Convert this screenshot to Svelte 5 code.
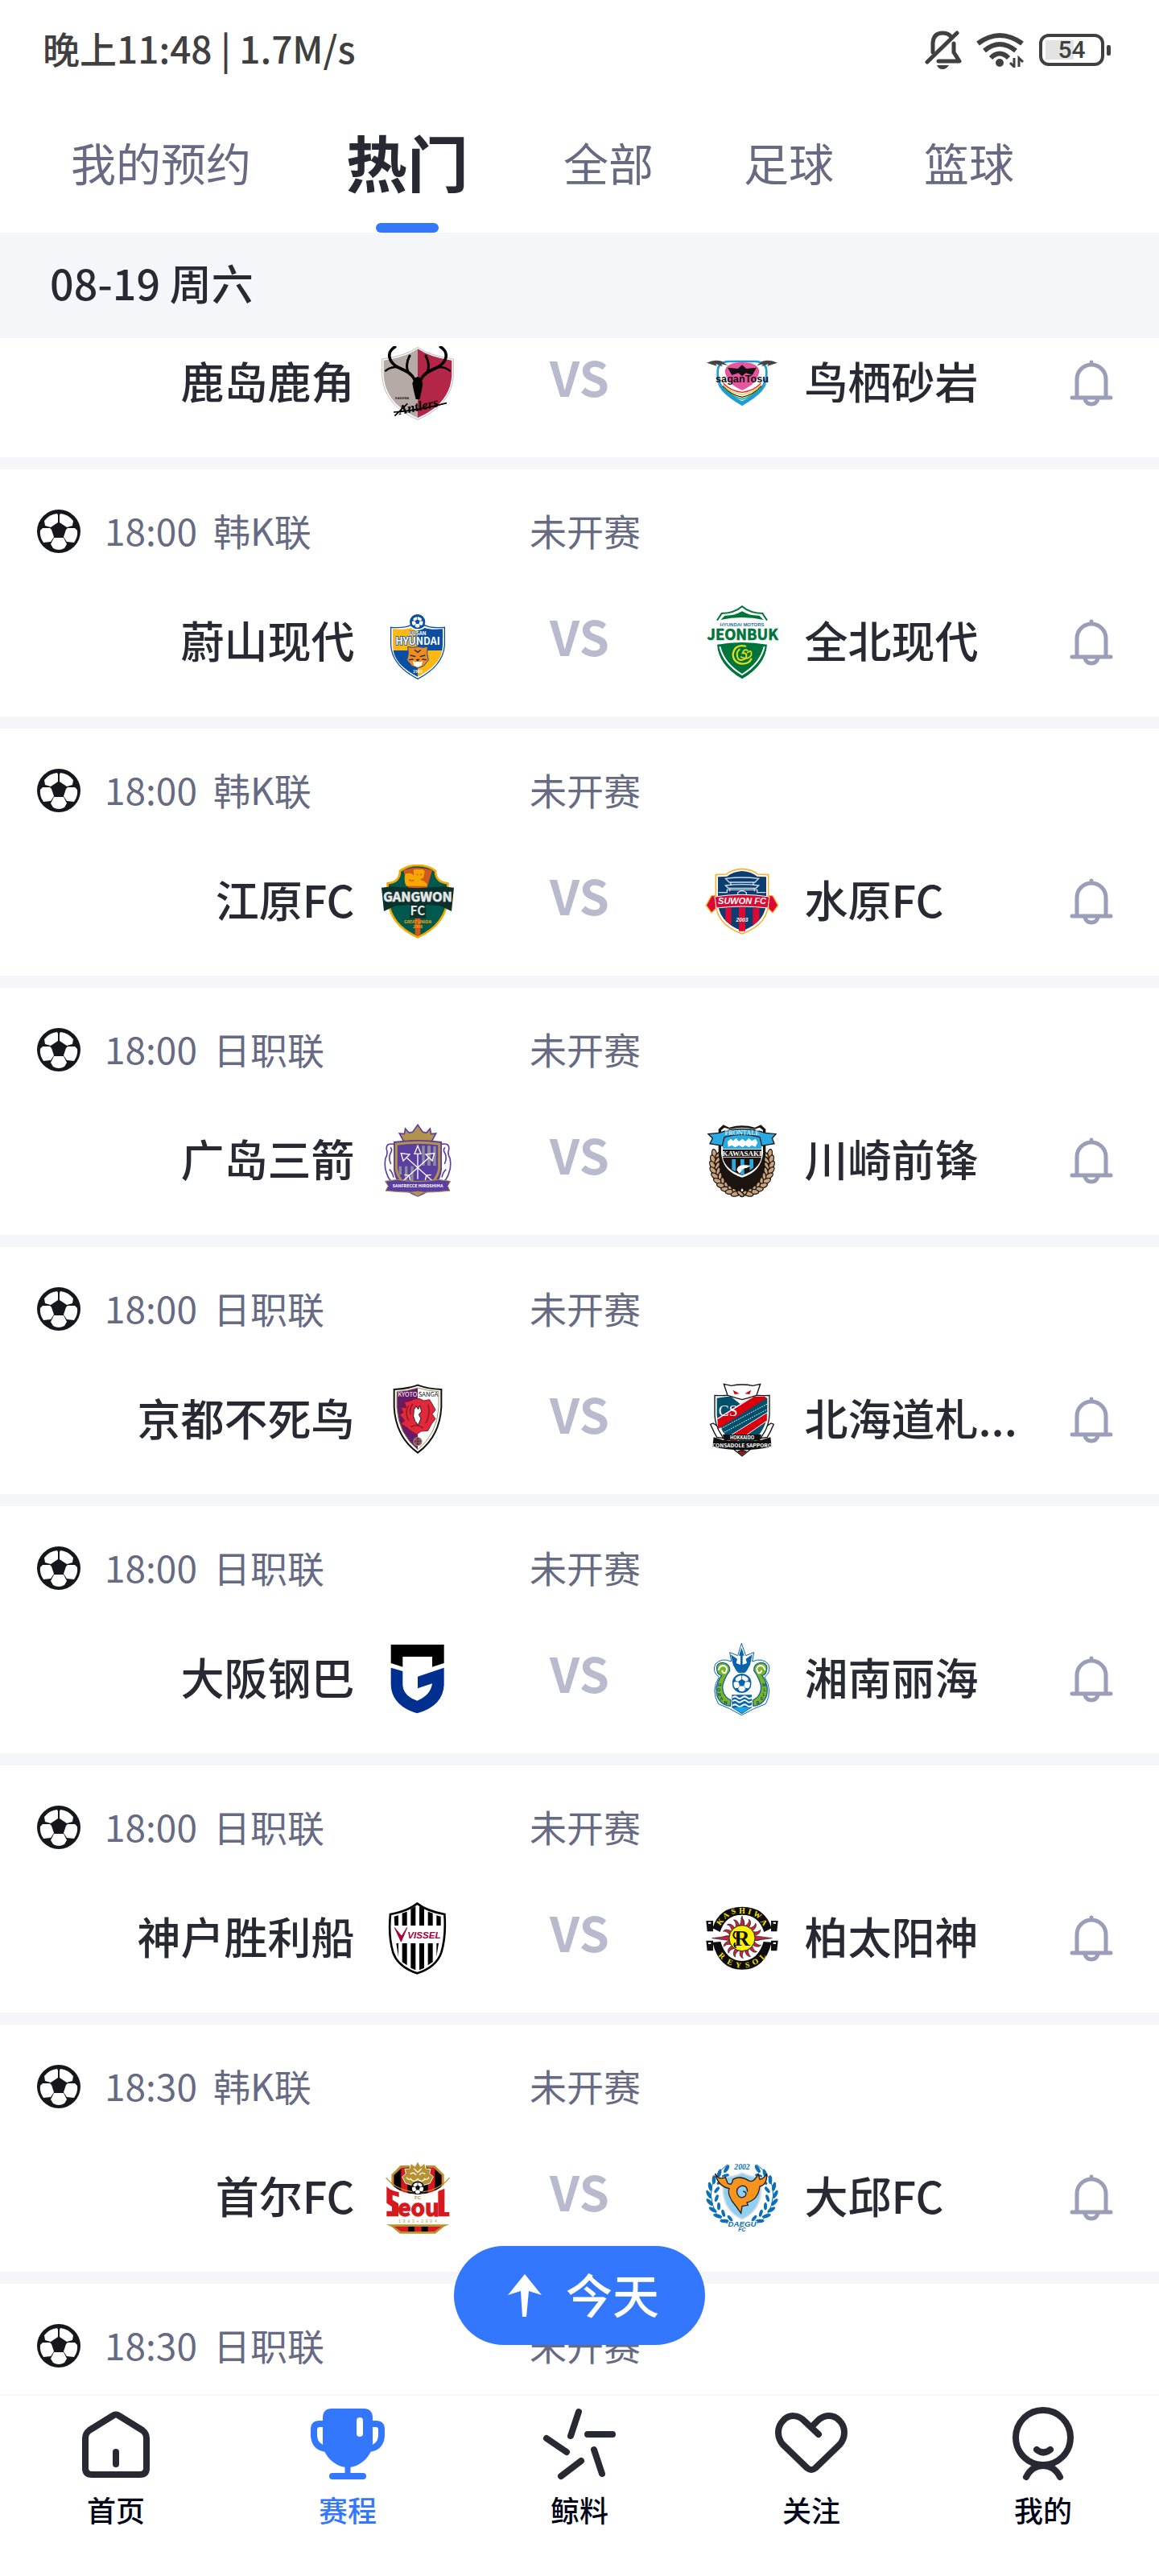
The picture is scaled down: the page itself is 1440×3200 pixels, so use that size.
<script lang="ts">
  type Side = { name: string; crest: string };
  type Match = { time?: string; league?: string; home: Side; away: Side };

  const tabs = ['我的预约', '热门', '全部', '足球', '篮球'];
  let activeTab = $state('热门');

  const matches: Match[] = [
    { home: { name: '鹿岛鹿角', crest: 'kashima' }, away: { name: '鸟栖砂岩', crest: 'tosu' } },
    { time: '18:00', league: '韩K联', home: { name: '蔚山现代', crest: 'ulsan' }, away: { name: '全北现代', crest: 'jeonbuk' } },
    { time: '18:00', league: '韩K联', home: { name: '江原FC', crest: 'gangwon' }, away: { name: '水原FC', crest: 'suwon' } },
    { time: '18:00', league: '日职联', home: { name: '广岛三箭', crest: 'hiroshima' }, away: { name: '川崎前锋', crest: 'kawasaki' } },
    { time: '18:00', league: '日职联', home: { name: '京都不死鸟', crest: 'kyoto' }, away: { name: '北海道札...', crest: 'sapporo' } },
    { time: '18:00', league: '日职联', home: { name: '大阪钢巴', crest: 'gamba' }, away: { name: '湘南丽海', crest: 'shonan' } },
    { time: '18:00', league: '日职联', home: { name: '神户胜利船', crest: 'vissel' }, away: { name: '柏太阳神', crest: 'reysol' } },
    { time: '18:30', league: '韩K联', home: { name: '首尔FC', crest: 'seoul' }, away: { name: '大邱FC', crest: 'daegu' } }
  ];

  const nav = [
    { id: 'home', label: '首页' },
    { id: 'schedule', label: '赛程' },
    { id: 'whale', label: '鲸料' },
    { id: 'follow', label: '关注' },
    { id: 'mine', label: '我的' }
  ];

  // Leaves along an arc, given as centre, radii and an angle range in degrees.
  function leaves(cx: number, cy: number, rx: number, ry: number, from: number, to: number, count: number) {
    return Array.from({ length: count }, (_, i) => {
      const deg = from + ((to - from) * i) / (count - 1);
      const rad = (deg * Math.PI) / 180;
      return { x: Math.round(cx + rx * Math.cos(rad)), y: Math.round(cy + ry * Math.sin(rad)), deg: Math.round(deg) };
    });
  }
  const wheatRight = leaves(138, 150, 108, 112, -18, 78, 10);
  const laurelOuter = leaves(138, 130, 124, 112, -62, 58, 9);
  const laurelInner = leaves(138, 130, 96, 96, -50, 62, 7);
  const rays = Array.from({ length: 16 }, (_, i) => Math.round(i * 22.5));
</script>

{#snippet ballArt(ink: string)}
  <svg viewBox="0 0 54 54" aria-hidden="true">
    <circle cx="27" cy="27" r="27" fill={ink} />
    <g fill="#fff">
      <path d="M9 14Q15 6 25 5L26 7V16L17 22L10 20Z" />
      <path d="M45 14Q39 6 29 5L28 7V16L37 22L44 20Z" />
      <path d="M4 26L7 23L16 23L18 25L21 34L17 40L8 41Q3 34 4 26Z" />
      <path d="M50 26L47 23L38 23L36 25L33 34L37 40L46 41Q51 34 50 26Z" />
      <path d="M21 35H33L37 43L34 48Q27 52 20 48L17 43Z" />
    </g>
  </svg>
{/snippet}

{#snippet miniBall(x: number, y: number, r: number, ink: string)}
  <svg x={x - r} y={y - r} width={2 * r} height={2 * r} viewBox="0 0 54 54">
    <circle cx="27" cy="27" r="27" fill={ink} />
    <g fill="#fff">
      <path d="M9 14Q15 6 25 5L26 7V16L17 22L10 20Z" />
      <path d="M45 14Q39 6 29 5L28 7V16L37 22L44 20Z" />
      <path d="M4 26L7 23L16 23L18 25L21 34L17 40L8 41Q3 34 4 26Z" />
      <path d="M50 26L47 23L38 23L36 25L33 34L37 40L46 41Q51 34 50 26Z" />
      <path d="M21 35H33L37 43L34 48Q27 52 20 48L17 43Z" />
    </g>
  </svg>
{/snippet}

{#snippet crest(id: string)}
  <svg class="crest" viewBox="0 0 276 276" aria-hidden="true">
    {#if id === 'kashima'}
      <path d="M5 48Q95 36 138 4Q181 36 271 48V110Q264 220 138 274Q12 220 5 110Z" fill="#fff" stroke="#999" stroke-width="2" />
      <path d="M138 10Q92 42 11 53V110Q18 215 138 267Z" fill="#b5aaa6" />
      <path d="M138 10Q184 42 265 53V110Q258 215 138 267Z" fill="#b42647" />
      <g fill="none" stroke="#000" stroke-linecap="round">
        <path d="M128 128C112 92 84 92 56 74C28 54 22 22 53 3" stroke-width="11" />
        <path d="M110 106C90 86 98 54 108 36" stroke-width="9" />
        <path d="M88 88C62 72 34 78 18 92" stroke-width="7" />
        <path d="M148 128C164 92 192 92 220 74C248 54 254 22 223 3" stroke-width="11" />
        <path d="M166 106C186 86 178 54 168 36" stroke-width="9" />
        <path d="M188 88C214 72 242 78 258 92" stroke-width="7" />
      </g>
      <path d="M128 118L138 114L148 118L157 138L153 165L145 198H131L123 165L118 138Z" />
      <text x="54" y="199" font-size="11" font-weight="700" fill="#222" font-family="Liberation Sans">KASHIMA</text>
      <text x="70" y="256" font-size="50" font-style="italic" font-weight="700" font-family="Liberation Serif" transform="rotate(-12 70 256)">Antlers</text>
      <path d="M48 246Q140 240 246 212M52 260L100 214" fill="none" stroke="#000" stroke-width="5" />
    {:else if id === 'tosu'}
      <path d="M47 94Q48 58 90 57H186Q228 58 229 94Q234 162 138 218Q42 162 47 94Z" fill="#fff" stroke="#1c9cd8" stroke-width="8" />
      <path d="M50 140Q75 170 138 205Q201 170 226 140L232 112Q238 170 138 220Q38 170 44 112Z" fill="#1c9cd8" />
      <path d="M74 92Q80 60 138 60Q196 60 202 92Q196 140 138 164Q80 140 74 92Z" fill="#e8559c" />
      <g fill="none" stroke-width="4">
        <path d="M68 138Q95 168 138 172Q181 168 208 138" stroke="#e23" />
        <path d="M66 143Q95 176 138 181Q181 176 210 143" stroke="#f2c318" />
        <path d="M66 149Q95 182 138 190Q181 182 210 149" stroke="#222" />
        <path d="M70 155Q98 188 138 198Q178 188 206 155" stroke="#16a05a" />
      </g>
      <path d="M6 62Q34 48 62 56L84 72L58 66L66 76L40 66L44 74Z" fill="#444" />
      <path d="M270 62Q242 48 214 56L192 72L218 66L210 76L236 66L232 74Z" fill="#444" />
      <path d="M84 80L122 84L138 70L154 84L192 80L176 108L152 100L138 112L124 100L100 108Z" fill="#111" />
      <text x="138" y="134" text-anchor="middle" font-size="38" font-weight="700" fill="#111" font-family="Liberation Sans">saganTosu</text>
    {:else if id === 'ulsan'}
      <circle cx="137" cy="62" r="29" fill="#0c4ea2" />
      <path d="M38 82Q90 86 112 74Q137 98 164 74Q184 86 238 82V150Q232 226 138 274Q44 226 38 150Z" fill="#fff" stroke="#0c4ea2" stroke-width="4" />
      {@render miniBall(137, 62, 24, '#0c4ea2')}
      <path d="M45 88Q90 92 112 84Q124 94 138 94V168H47Q45 156 45 140Z" fill="#fdb813" />
      <path d="M231 88Q186 92 164 84Q152 94 138 94V168H229Q231 156 231 140Z" fill="#0c4ea2" />
      <path d="M47 168H138V266Q56 224 47 168Z" fill="#0c4ea2" />
      <path d="M229 168H138V266Q220 224 229 168Z" fill="#fdb813" />
      <text x="138" y="111" text-anchor="middle" font-size="19" font-weight="700" fill="#fff" stroke="#0c4ea2" stroke-width="3" paint-order="stroke" class="slim">ULSAN</text>
      <text x="138" y="148" text-anchor="middle" font-size="37" font-weight="700" fill="#fff" stroke="#0c4ea2" stroke-width="5" paint-order="stroke" class="slim">HYUNDAI</text>
      <path d="M101 154L118 157Q138 151 158 157L175 154L173 180L178 204L160 226L138 234L116 226L98 204L103 180Z" fill="#f28a1c" stroke="#0c4ea2" stroke-width="3" />
      <path d="M110 186L130 191M166 186L146 191M105 203L122 201M171 203L154 201M126 166L138 175L150 166" fill="none" stroke="#0c2f66" stroke-width="4" />
      <path d="M119 206L130 212L138 207L146 212L157 206L152 224L138 230L124 224Z" fill="#fff" />
      <path d="M131 200H145L138 211Z" fill="#222" />
      <text x="138" y="253" text-anchor="middle" font-size="15" font-weight="700" fill="#fff" class="slim">1983</text>
    {:else if id === 'jeonbuk'}
      <path d="M45 56L62 30Q108 30 138 4Q168 30 214 30L231 56" fill="none" stroke="#00753b" stroke-width="6" />
      <path d="M58 54L74 38Q114 38 138 22Q162 38 202 38L218 54Q138 36 58 54Z" fill="#00753b" />
      <text x="138" y="77" text-anchor="middle" font-size="18" font-weight="700" fill="#1f6f96" font-family="Liberation Sans">HYUNDAI MOTORS</text>
      <text x="140" y="130" text-anchor="middle" font-size="55" font-weight="700" fill="#00753b" stroke="#00753b" stroke-width="2" class="slim">JEONBUK</text>
      <path d="M45 146Q138 130 231 146Q226 222 138 274Q50 222 45 146Z" fill="#00753b" />
      <path d="M55 154Q70 218 138 258Q206 218 221 154" fill="none" stroke="#fff" stroke-width="6" />
      <g fill="none" stroke="#e5dc1a" stroke-width="7" stroke-linecap="round">
        <path d="M150 152Q112 144 104 180Q104 216 142 218Q166 216 172 200" />
        <path d="M128 164Q112 178 124 200Q138 210 152 196Q160 176 140 178Q146 160 158 168" stroke-width="6" />
        <path d="M158 176Q176 162 172 186Q158 206 134 192" stroke-width="5" />
      </g>
    {:else if id === 'gangwon'}
      <path d="M138 3Q178 3 204 24Q204 66 250 70V120Q246 222 138 271Q30 222 26 120V70Q72 66 72 24Q98 3 138 3Z" fill="#00594e" stroke="#f7a800" stroke-width="8" />
      <path d="M84 22Q138 0 192 22L172 90H104Z" fill="#d1561f" />
      <path d="M126 90H150L148 258L138 266L128 258Z" fill="#d1561f" />
      <path d="M122 20L130 18H156L164 24L160 48L146 56Q172 62 174 80H96Q84 60 92 34L112 32L124 40Z" fill="#f7a800" />
      <path d="M134 34L138 40M152 34L148 40M124 58Q112 64 106 56" stroke="#d1561f" stroke-width="4" fill="none" />
      <path d="M3 86L40 82L138 88L236 82L273 86L264 174L222 154L168 150V200H108V150L54 154L12 174Z" fill="#0c302c" />
      <text x="138" y="138" text-anchor="middle" font-size="49" font-weight="700" fill="#e6e6e6" stroke="#e6e6e6" stroke-width="2" class="slim">GANGWON</text>
      <text x="138" y="190" text-anchor="middle" font-size="46" font-weight="700" fill="#e6e6e6" class="slim">FC</text>
      <text x="138" y="220" text-anchor="middle" font-size="15" font-weight="700" fill="#f7a800" class="slim">GREAT UNION</text>
      <text x="138" y="238" text-anchor="middle" font-size="15" font-weight="700" fill="#f7a800" class="slim">2008</text>
    {:else if id === 'suwon'}
      <path d="M138 16Q176 18 196 36L236 38V130Q242 220 138 258Q34 220 40 130V38L80 36Q100 18 138 16Z" fill="#fff" stroke="#f9b233" stroke-width="5" />
      <path d="M138 24Q172 26 194 44L228 46V130Q232 212 138 248Q44 212 48 130V46L82 44Q104 26 138 24Z" fill="#0d3d6e" />
      <g fill="none" stroke="#cfe0ee" stroke-width="4">
        <path d="M76 52Q138 44 200 52L186 66H90ZM96 66V74M180 66V74M76 78Q138 70 200 78L190 88H86ZM92 88V100M184 88V100M50 104H82V94H194V104H226M122 118V104Q138 92 154 104V118" />
      </g>
      <path d="M4 152L24 116L42 116L40 164L24 180ZM272 152L252 116L234 116L236 164L252 180Z" fill="#dc0a32" stroke="#f9b233" stroke-width="4" />
      <path d="M76 160H98V226L76 208ZM126 160H150V248H126ZM178 160H202V206L178 228Z" fill="#dc0a32" />
      <path d="M36 120Q138 104 240 120L234 162Q138 150 42 162Z" fill="#dc0a32" stroke="#fff" stroke-width="3" />
      <text x="138" y="148" text-anchor="middle" font-size="33" font-weight="700" font-style="italic" fill="#fff" font-family="Liberation Sans">SUWON FC</text>
      <text x="138" y="213" text-anchor="middle" font-size="20" font-weight="700" font-style="italic" fill="#fff" font-family="Liberation Sans">2003</text>
    {:else if id === 'hiroshima'}
      <path d="M86 66L70 36L88 38L92 18L106 34L120 30L138 4L156 30L170 34L184 18L188 38L206 36L190 66Z" fill="#b3924c" stroke="#5b3fa0" stroke-width="5" />
      <path d="M50 76Q18 70 22 96Q28 112 18 128Q12 160 22 184Q30 214 52 220M226 76Q258 70 254 96Q248 112 258 128Q264 160 254 184Q246 214 224 220" fill="#fff" stroke="#5b3fa0" stroke-width="5" />
      <path d="M36 88Q46 96 36 110Q28 130 38 150M32 170Q44 180 48 200M240 88Q230 96 240 110Q248 130 238 150M244 170Q232 180 228 200" fill="none" stroke="#5b3fa0" stroke-width="5" />
      <path d="M48 66Q138 54 228 66V170Q222 240 138 272Q54 240 48 170Z" fill="#5b3fa0" />
      <path d="M58 76Q138 64 218 76V166Q212 220 138 252Q64 220 58 166Z" fill="#5b3fa0" stroke="#b3924c" stroke-width="9" />
      <path d="M154 82H164V156H154ZM174 82H186V156H174ZM196 84H206V156H196ZM68 158H78V190H68ZM90 158H100V212H90ZM112 158H122V222H112Z" fill="#8f8f9b" />
      <g stroke="#fff" stroke-width="4" fill="none">
        <path d="M138 82L150 112H126ZM138 112V206" />
        <path d="M76 110L108 114L84 138ZM96 126L192 212" />
        <path d="M200 110L168 114L192 138ZM180 126L84 212" />
        <path d="M88 190L106 192L110 210M188 190L170 192L166 210" />
      </g>
      <path d="M16 214L62 208Q138 222 214 208L260 214L250 232L258 250Q138 262 18 250L28 232Z" fill="#5b3fa0" stroke="#b3924c" stroke-width="3" />
      <text x="138" y="236" text-anchor="middle" font-size="16" font-weight="700" fill="#fff" class="slim">SANFRECCE HIROSHIMA</text>
      <path d="M112 256Q138 246 164 256L138 270Z" fill="#b3924c" />
    {:else if id === 'kawasaki'}
      <g fill="#c9a27a" stroke="#1b1411" stroke-width="4">
        <path d="M28 110Q14 170 60 226Q96 262 130 250L138 236L146 250Q180 262 216 226Q262 170 248 110Z" fill="#1b1411" />
        {#each wheatRight as leaf}
          <ellipse cx={leaf.x} cy={leaf.y} rx="9" ry="20" transform="rotate({leaf.deg + 28} {leaf.x} {leaf.y})" />
          <ellipse cx={276 - leaf.x} cy={leaf.y} rx="9" ry="20" transform="rotate({-leaf.deg - 28} {276 - leaf.x} {leaf.y})" />
          <ellipse cx={leaf.x - 16} cy={leaf.y} rx="7" ry="15" transform="rotate({leaf.deg - 28} {leaf.x - 16} {leaf.y})" />
          <ellipse cx={292 - leaf.x} cy={leaf.y} rx="7" ry="15" transform="rotate({28 - leaf.deg} {292 - leaf.x} {leaf.y})" />
        {/each}
      </g>
      <path d="M50 20L68 4L90 14Q138 0 186 14L208 4L226 20V110Q222 190 138 212Q54 190 50 110Z" fill="#1b1411" />
      <path d="M60 24L72 14L92 20Q138 8 184 20L204 14L216 24V110Q210 178 138 200Q66 178 60 110Z" fill="#fff" />
      <path d="M66 50Q138 30 210 50V94H66Z" fill="#29abe2" />
      <path d="M66 96H210V124H66Z" fill="#1b1411" />
      <path d="M66 126H210Q200 172 138 192Q76 172 66 126Z" fill="#1b1411" />
      <path d="M100 132H114V178L100 170ZM132 132H146V190H132ZM166 132H180V164L166 174Z" fill="#29abe2" />
      <path d="M12 38L52 34Q138 4 224 34L264 38L250 54L258 74L212 82L204 50Q138 30 72 50L64 82L18 74L28 54Z" fill="#29abe2" stroke="#1b1411" stroke-width="4" />
      <text x="138" y="43" text-anchor="middle" font-size="25" fill="#fff" font-family="Liberation Serif">FRONTALE</text>
      <path d="M84 66L96 56L104 64L116 54L126 66L140 56L150 66L164 54L174 64L188 56L196 70L188 86L174 80L164 88L150 80L140 88L126 80L112 88L100 80L86 86Z" fill="#fff" />
      <text x="138" y="120" text-anchor="middle" font-size="27" font-weight="700" fill="#fff" font-family="Liberation Serif">KAWASAKI</text>
      <path d="M118 172Q122 150 152 154L170 156L156 164Q138 166 134 178L128 186Z" fill="#fff" />
    {:else if id === 'kyoto'}
      <path d="M50 24Q100 22 138 8Q176 22 226 24V90Q220 200 138 260Q56 200 50 90Z" fill="#fff" stroke="#111" stroke-width="6" />
      <path d="M138 18Q100 30 60 32V92Q66 190 138 248Z" fill="#651b67" />
      <path d="M138 18Q100 30 60 32V92Q66 190 138 248Q210 190 216 92V32Q176 30 138 18Z" fill="none" stroke="#a8935a" stroke-width="3" />
      <text x="100" y="51" text-anchor="middle" font-size="23" fill="#fff" class="slim">KYOTO</text>
      <text x="177" y="51" text-anchor="middle" font-size="23" fill="#111" class="slim">SANGA</text>
      <path d="M88 72L112 66Q138 50 160 66L182 62L194 82L204 100L192 116L204 134L190 152L176 178L150 180L134 192L108 176L96 164L74 152L90 140L70 118L84 110L74 90L96 92Z" fill="#e0293a" stroke="#8f1326" stroke-width="3" />
      <path d="M124 100L132 86L140 98L146 84L152 106L142 118L150 132L140 156L128 142L122 124Z" fill="#fff" stroke="#222" stroke-width="3" />
      <path d="M104 84Q88 112 104 140M176 80Q188 112 168 150M112 164Q138 150 158 168M120 78Q104 96 112 118" fill="none" stroke="#8f1326" stroke-width="4" />
      <circle cx="138" cy="218" r="15" fill="#651b67" stroke="#a8935a" stroke-width="4" />
      <path d="M124 212H152M124 222H152M132 206V230M144 206V230" stroke="#a8935a" stroke-width="2" />
    {:else if id === 'sapporo'}
      <path d="M30 150L20 154L34 184L44 202L68 206L60 170ZM246 150L256 154L242 184L232 202L208 206L216 170Z" fill="#fff" stroke="#111" stroke-width="4" />
      <path d="M36 46Q80 48 90 44H186Q198 48 240 46V120Q236 200 138 272Q40 200 36 120Z" fill="#fff" stroke="#111" stroke-width="4" />
      <path d="M44 56L86 50H190L232 56V120Q226 186 138 258Q50 186 44 120Z" fill="#00506b" />
      <path d="M96 50H180L138 84Z" fill="#fff" />
      <path d="M46 130L176 50H222L230 56L48 172Z" fill="#d9000d" />
      <path d="M46 134L180 50" stroke="#fff" stroke-width="4" />
      <path d="M52 174L232 78M64 188L232 98" stroke="#fff" stroke-width="3" stroke-dasharray="5 4" />
      <path d="M78 206L232 110V140L108 226Z" fill="#d9000d" stroke="#fff" stroke-width="3" />
      <path d="M84 46L70 4L98 10Q138 2 178 10L206 4L192 46L160 56L138 62L116 56Z" fill="#fff" stroke="#111" stroke-width="4" />
      <path d="M104 26L128 40L110 42ZM172 26L148 40L166 42Z" fill="#d9000d" />
      <text x="86" y="122" text-anchor="middle" font-size="58" fill="#fff" font-family="Liberation Serif">CS</text>
      <path d="M66 192H210L204 214H72Z" fill="#111" />
      <text x="138" y="209" text-anchor="middle" font-size="17" font-weight="700" fill="#fff" class="slim">HOKKAIDO</text>
      <path d="M32 202L66 212Q138 222 210 212L244 202L248 238Q138 262 28 238Z" fill="#111" />
      <text x="138" y="240" text-anchor="middle" font-size="20" font-weight="700" fill="#fff" class="slim">CONSADOLE SAPPORO</text>
      <path d="M122 254H154L138 268Z" fill="#d9000d" stroke="#111" stroke-width="3" />
    {:else if id === 'gamba'}
      <path d="M38 9H236V78L192 92V54H82V92L38 78Z" fill="#000" />
      <path d="M38 95L82 108V160Q84 200 136 218Q186 198 192 154L138 172V128L236 95V160Q232 238 136 265Q42 238 38 160Z" fill="#00308f" />
    {:else if id === 'shonan'}
      <g fill="#fff" stroke="#0a63ad" stroke-width="3">
        <path d="M136 4L122 50L92 38L98 72Q60 56 38 82Q26 112 52 130Q20 180 50 230L92 248L136 272L182 248L226 230Q254 180 222 130Q248 112 236 82Q214 56 176 72L182 38L152 50Z" />
      </g>
      <path d="M136 20L146 50H140V84L156 78L152 62L176 46L168 84L156 106L148 114H124L116 106L104 84L96 46L120 62L116 78L132 84V50H126Z" fill="#0a63ad" />
      <path d="M46 110Q36 78 66 76Q94 80 92 106Q74 130 66 160Q62 200 96 216L94 238Q42 230 42 176Q44 146 62 124Q48 122 46 110Z" fill="#7ab51d" stroke="#0a63ad" stroke-width="4" />
      <path d="M228 110Q238 78 208 76Q180 80 182 106Q200 130 208 160Q212 200 178 216L180 238Q232 230 232 176Q230 146 212 124Q226 122 228 110Z" fill="#7ab51d" stroke="#0a63ad" stroke-width="4" />
      <path d="M50 104Q56 84 72 88Q88 96 76 114Q64 118 64 104M224 104Q218 84 202 88Q186 96 198 114Q210 118 210 104" fill="none" stroke="#fff" stroke-width="6" />
      {@render miniBall(137, 153, 36, '#0a63ad')}
      <path d="M100 196H174V244L137 268L100 244Z" fill="#0a63ad" />
      <path d="M102 206Q112 198 120 206T138 206T156 206T174 206M102 220Q112 212 120 220T138 220T156 220T174 220M102 236Q112 228 120 236T138 236T156 236T174 236" fill="none" stroke="#fff" stroke-width="6" />
      <path d="M106 246Q138 236 168 246L137 264Z" fill="#1ea4e4" />
      <g font-size="17" font-weight="700" fill="#0a4b8c" font-family="Liberation Sans" text-anchor="middle">
        <text x="54" y="164">H</text><text x="51" y="182">O</text><text x="53" y="200">N</text><text x="61" y="217">A</text><text x="77" y="230">N</text>
        <text x="220" y="164">M</text><text x="222" y="182">L</text><text x="220" y="200">L</text><text x="212" y="216">E</text><text x="197" y="230">B</text>
      </g>
    {:else if id === 'vissel'}
      <path d="M36 48Q100 36 136 8Q172 36 238 48Q244 130 226 190Q208 244 136 268Q64 244 46 190Q28 130 36 48Z" fill="#fff" stroke="#000" stroke-width="8" />
      <path d="M50 56L66 52V90H52ZM80 44L98 38V90H80ZM112 28L130 18V90H112ZM144 18L162 28V90H144ZM176 38L194 44V90H176ZM208 52L224 56V90H208ZM58 156H66V206ZM80 156H98V238L80 226ZM112 156H130V256L112 248ZM144 156H162V248L144 256ZM176 156H194V226L176 238ZM208 156H216L208 206Z" />
      <path d="M52 98L76 150L98 98L78 130Z" fill="#a5003b" stroke="#a5003b" stroke-width="3" />
      <text x="162" y="138" text-anchor="middle" font-size="35" font-weight="700" font-style="italic" fill="#a5003b" font-family="Liberation Sans">VISSEL</text>
    {:else if id === 'reysol'}
      <path d="M4 72H30V112H8ZM272 72H246V112H268ZM4 146H30V184H8ZM272 146H246V184H268Z" fill="#111" />
      <path d="M12 80H22M254 80H264M12 156H22M254 156H264" stroke="#fff" stroke-width="6" />
      <path d="M28 100Q52 20 138 20Q224 20 248 100L220 114Q200 50 138 50Q76 50 56 114Z" fill="#0d0d0d" />
      <path d="M28 152Q52 254 138 254Q224 254 248 152L218 150Q198 220 138 222Q78 220 58 150Z" fill="#0d0d0d" />
      {#each rays as deg}
        <path d="M130 92Q142 74 134 62Q150 66 146 92Z" fill="#c3263f" stroke="#222" stroke-width="2" transform="rotate({deg} 138 137)" />
      {/each}
      <path d="M26 137L92 128V146ZM250 137L184 128V146Z" fill="#c3263f" stroke="#222" stroke-width="2" />
      <path d="M138 54L130 90H146Z" fill="#c3263f" stroke="#222" stroke-width="2" />
      <circle cx="138" cy="137" r="48" fill="#fff200" stroke="#222" stroke-width="3" />
      <text x="138" y="165" text-anchor="middle" font-size="80" font-weight="700" font-family="Liberation Serif" fill="#111">R</text>
      <path d="M112 112Q98 128 116 140M116 172Q104 166 112 154" fill="none" stroke="#111" stroke-width="6" />
      <g font-size="29" font-weight="700" fill="#ffe600" font-family="Liberation Serif" text-anchor="middle">
        <text x="55" y="86" transform="rotate(-52 55 76)">K</text><text x="78" y="61" transform="rotate(-36 78 53)">A</text><text x="106" y="46" transform="rotate(-18 106 38)">S</text><text x="138" y="44">H</text><text x="166" y="48" transform="rotate(16 166 40)">I</text><text x="194" y="60" transform="rotate(34 194 52)">W</text><text x="220" y="88" transform="rotate(52 220 78)">A</text>
        <text x="62" y="212" transform="rotate(44 62 204)">R</text><text x="92" y="236" transform="rotate(24 92 228)">E</text><text x="124" y="247" transform="rotate(8 124 238)">Y</text><text x="158" y="246" transform="rotate(-10 158 238)">S</text><text x="188" y="234" transform="rotate(-28 188 226)">O</text><text x="214" y="214" transform="rotate(-46 214 204)">L</text>
      </g>
    {:else if id === 'seoul'}
      <path d="M74 18H202L236 52V110L206 132H70L40 110V52Z" fill="#b8922e" />
      <path d="M78 26H198L228 56V108L200 124H76L48 108V56Z" fill="#d7191f" />
      <path d="M50 54L76 30V122L50 108ZM100 26H124V122H100ZM152 26H176V122H152ZM202 32L226 54V108L202 122Z" fill="#000" />
      <path d="M138 2L148 22L164 10L168 30L186 32L182 48L196 60L184 84L160 92L138 104L116 92L92 84L80 60L94 48L90 32L108 30L112 10L128 22Z" fill="#b8922e" stroke="#fff" stroke-width="3" />
      <path d="M110 50Q124 40 132 54M166 50Q152 40 144 54M112 70Q126 84 138 68Q150 84 164 70M124 30L138 44L152 30M96 62Q104 76 114 66M180 62Q172 76 162 66" fill="none" stroke="#fff" stroke-width="4" />
      <path d="M20 66Q60 124 138 126Q216 124 256 66L254 104Q214 140 138 144Q62 140 22 104Z" fill="#fff" />
      <path d="M20 64Q60 114 138 118Q216 114 256 64" fill="none" stroke="#b8922e" stroke-width="4" />
      {@render miniBall(138, 102, 25, '#111')}
      <text x="138" y="145" text-anchor="middle" font-size="18" font-weight="700" fill="#b8922e" font-family="Liberation Sans">FC</text>
      <path d="M22 96Q34 112 68 118V136L44 128V146L66 160V208H22V188H42V172L22 158Z" fill="#d7191f" />
      <path d="M238 104V192H256V208H214V114Z" fill="#d7191f" />
      <text x="141" y="208" text-anchor="middle" font-size="84" font-weight="700" fill="#d7191f" stroke="#d7191f" stroke-width="4" class="slim">eou</text>
      <text x="138" y="230" text-anchor="middle" font-size="14" fill="#b8922e" font-family="Liberation Mono">1 9 8 3 + 2 0 0 4</text>
      <path d="M20 238H256L236 246L204 272H72L40 246Z" fill="#b8922e" />
      <path d="M50 246H226L200 264H76Z" fill="#d7191f" />
      <path d="M102 246H126V264H102ZM152 246H176V264H152Z" fill="#000" />
    {:else if id === 'daegu'}
      <g fill="none" stroke="#0b70b8" stroke-width="3">
        <path d="M84 14Q20 60 22 130Q30 210 84 234M192 14Q256 60 254 130Q246 210 192 234" />
      </g>
      <g fill="#0b70b8">
        {#each laurelOuter as leaf}
          <ellipse cx={leaf.x} cy={leaf.y} rx="7" ry="17" transform="rotate({leaf.deg + 30} {leaf.x} {leaf.y})" />
          <ellipse cx={276 - leaf.x} cy={leaf.y} rx="7" ry="17" transform="rotate({-leaf.deg - 30} {276 - leaf.x} {leaf.y})" />
        {/each}
        {#each laurelInner as leaf}
          <ellipse cx={leaf.x} cy={leaf.y} rx="6" ry="14" transform="rotate({leaf.deg - 25} {leaf.x} {leaf.y})" />
          <ellipse cx={276 - leaf.x} cy={leaf.y} rx="6" ry="14" transform="rotate({25 - leaf.deg} {276 - leaf.x} {leaf.y})" />
        {/each}
      </g>
      <path d="M68 64Q112 60 138 46Q164 60 208 64V120Q200 190 138 218Q76 190 68 120Z" fill="#8ed0f3" stroke="#d6d9de" stroke-width="6" />
      <path d="M38 48Q50 74 76 62L84 84Q100 96 104 70Q132 54 162 74Q180 86 198 50L204 70Q222 66 230 48Q232 90 204 96Q198 146 156 156L160 166L138 170L134 196Q116 170 100 150Q82 120 90 104Q48 96 38 48Z" fill="#f7941e" stroke="#222" stroke-width="4" />
      <path d="M158 116Q158 92 136 94Q114 100 120 124Q130 146 150 132Q158 118 142 114" fill="#8ed0f3" stroke="#222" stroke-width="4" />
      <text x="138" y="32" text-anchor="middle" font-size="29" font-style="italic" font-weight="700" fill="#0b70b8" font-family="Liberation Serif">2002</text>
      <text x="138" y="246" text-anchor="middle" font-size="29" font-style="italic" font-weight="700" fill="#0b70b8" stroke="#fff" stroke-width="4" paint-order="stroke" font-family="Liberation Sans">DAEGU</text>
      <text x="138" y="264" text-anchor="middle" font-size="21" font-style="italic" font-weight="700" fill="#0b70b8" font-family="Liberation Sans">FC</text>
    {/if}
  </svg>
{/snippet}

{#snippet navIcon(id: string)}
  <svg class="nav-icon" viewBox="0 0 92 92" fill="none" stroke="currentColor" stroke-width="8" stroke-linecap="round" stroke-linejoin="round" aria-hidden="true">
    {#if id === 'home'}
      <path d="M42 11Q46 8 50 11L79 29Q84 33 84 39V76Q84 84 76 84H16Q8 84 8 76V39Q8 33 13 29Z" />
      <path d="M46 56V71" />
    {:else if id === 'schedule'}
      <path d="M26 2H66Q77 2 77 14V45C77 60 62 75 46 75S15 60 15 45V14Q15 2 26 2Z" fill="currentColor" stroke="none" />
      <path d="M17 21H11Q4 21 4 28V36Q5 50 19 52M75 21H81Q88 21 88 28V36Q87 50 73 52" stroke-linecap="butt" />
      <path d="M46 72V84" stroke-linecap="butt" stroke-width="7" />
      <path d="M27 86H65" />
      <path d="M61 17V33" stroke="#fff" />
    {:else if id === 'whale'}
      <path d="M45 6L35 36M56 34H87M5 39L30 56M64 53L74 83M48 67L23 86" />
    {:else if id === 'follow'}
      <path d="M55 34L38 18C30 9 18 9 11 17C3 25 3 38 11 47L41 76Q46 80 51 76L81 47C89 38 89 25 81 17C74 9 62 9 54 17L47 24" />
    {:else}
      <circle cx="46" cy="38" r="34" />
      <path d="M38 53Q46 60 55 53" />
      <path d="M25 87Q32 73 46 73Q60 73 67 87" />
    {/if}
  </svg>
{/snippet}

{#snippet meta(time: string, league: string)}
  <div class="meta">
    <div class="kickoff">
      <span class="ball">{@render ballArt('#15171c')}</span>
      <span class="label">{time}</span>
      <span class="label">{league}</span>
    </div>
    <span class="label">未开赛</span>
  </div>
{/snippet}

<div class="screen">
  <div class="statusbar">
    <span>晚上11:48 | 1.7M/s</span>
    <div class="status-icons">
      <svg width="46" height="48" viewBox="0 0 46 48" fill="none" stroke="#404040" stroke-width="5" stroke-linecap="round" stroke-linejoin="round" role="img" aria-label="静音">
        <path d="M10 27V15Q11 3 22 3Q29 3 32 7M36 16V27L43 38H17" />
        <path d="M3 39L40 3" />
        <path d="M15 43H30Q27 48 22 48T15 43Z" fill="#404040" stroke="none" />
      </svg>
      <svg width="60" height="44" viewBox="0 0 60 44" fill="none" stroke="#404040" stroke-width="6" role="img" aria-label="无线网络">
        <path d="M2 14Q29 -6 57 14M10 23Q29 7 49 23M18 32Q29 21 40 32" />
        <circle cx="29" cy="38" r="5" fill="#404040" stroke="none" />
        <path d="M47 32V43L42 38M53 43V32L58 37" stroke-width="3" />
      </svg>
      <div class="battery" role="img" aria-label="电量 54">
        <div class="cell"><span>54</span></div>
        <i></i>
      </div>
    </div>
  </div>

  <div class="tabs" role="tablist">
    {#each tabs as tab}
      <button type="button" role="tab" class:active={tab === activeTab} aria-selected={tab === activeTab} onclick={() => (activeTab = tab)}>{tab}</button>
    {/each}
  </div>

  <h2 class="date">08-19 周六</h2>

  <main>
    <ul class="list">
      {#each matches as m}
        <li class="match" class:partial={!m.time}>
          {#if m.time && m.league}
            {@render meta(m.time, m.league)}
          {/if}
          <div class="teams">
            <span class="name home">{m.home.name}</span>
            {@render crest(m.home.crest)}
            <span class="vs">VS</span>
            {@render crest(m.away.crest)}
            <div class="away">
              <span class="name">{m.away.name}</span>
              <button type="button" class="remind" aria-label="预约提醒">
                <svg viewBox="0 0 54 58" fill="none" stroke="#9a9eb8" stroke-width="5" stroke-linecap="round" aria-hidden="true">
                  <path d="M9 46V24A18 18 0 0 1 45 24V46M3 47H51M19 49Q21 55 27 55T35 49M27 3V5" />
                </svg>
              </button>
            </div>
          </div>
        </li>
      {/each}
      <li class="match">{@render meta('18:30', '日职联')}</li>
    </ul>
    <button type="button" class="today">
      <svg viewBox="0 0 42 54" aria-hidden="true"><path d="M21 0L42 26L26 21L23 53H18L16 21L0 26Z" fill="#fff" /></svg>
      <span>今天</span>
    </button>
  </main>

  <nav>
    {#each nav as item}
      <a href="#{item.id}" class:current={item.id === 'schedule'}>
        {@render navIcon(item.id)}
        <span>{item.label}</span>
      </a>
    {/each}
  </nav>
</div>

<style>
  :global(body) {
    margin: 0;
    background: #fff;
  }
  .screen {
    display: flex;
    flex-direction: column;
    height: 100vh;
    overflow: hidden;
    background: #fff;
    color: #272a32;
    font-family: 'Noto Sans CJK SC', 'Noto Sans', sans-serif;
  }
  button {
    margin: 0;
    padding: 0;
    border: 0;
    background: none;
    color: inherit;
    font: inherit;
    cursor: pointer;
  }
  .statusbar {
    display: flex;
    align-items: center;
    justify-content: space-between;
    height: 124px;
    padding: 0 60px 0 53px;
    color: #404040;
    font-size: 46px;
    font-weight: 500;
  }
  .statusbar > span {
    padding-bottom: 6px;
  }
  .status-icons {
    display: flex;
    align-items: center;
    gap: 18px;
  }
  .battery {
    display: flex;
    align-items: center;
    gap: 3px;
  }
  .cell {
    box-sizing: border-box;
    width: 81px;
    height: 40px;
    border: 4px solid #404040;
    border-radius: 12px;
    background: linear-gradient(#e3e3e3, #e3e3e3) 4px 4px / 35px 24px no-repeat;
    font-family: Roboto, 'Noto Sans', sans-serif;
    font-size: 30px;
    font-weight: 500;
    line-height: 32px;
    text-align: center;
  }
  .battery i {
    width: 5px;
    height: 13px;
    border-radius: 2px;
    background: #404040;
  }
  .tabs {
    display: flex;
    height: 165px;
    padding: 0 32px;
  }
  .tabs button {
    position: relative;
    padding: 0 56px 12px;
    color: #666a82;
    font-size: 56px;
    line-height: 153px;
    white-space: nowrap;
  }
  .tabs .active {
    padding: 0 62px 12px;
    color: #272a32;
    font-size: 76px;
    font-weight: 700;
  }
  .tabs .active::after {
    content: '';
    position: absolute;
    bottom: 0;
    left: 50%;
    width: 78px;
    height: 12px;
    margin-left: -39px;
    border-radius: 6px;
    background: #3377ff;
  }
  .date {
    margin: 0;
    padding: 0 62px 8px;
    background: #f4f6fa;
    font-size: 52px;
    font-weight: 500;
    line-height: 123px;
  }
  main {
    position: relative;
    flex: 1;
    min-height: 0;
    overflow: hidden;
  }
  .list {
    display: flex;
    flex-direction: column;
    gap: 15px;
    margin: 0;
    padding: 0;
    background: #f4f6fa;
    list-style: none;
  }
  .match {
    display: flex;
    flex-direction: column;
    gap: 46px;
    padding: 31px 0 46px;
    background: #fff;
  }
  .match.partial {
    padding-top: 10px;
  }
  .meta {
    display: grid;
    grid-template-columns: 1fr auto 1fr;
    align-items: center;
    height: 92px;
    padding: 0 32px 0 46px;
    color: #666a82;
    font-size: 46px;
  }
  .label {
    padding-bottom: 4px;
  }
  .kickoff {
    display: flex;
    align-items: center;
    gap: 20px;
  }
  .ball {
    width: 54px;
    height: 54px;
    margin-right: 10px;
  }
  .ball :global(svg) {
    display: block;
  }
  .teams {
    display: grid;
    grid-template-columns: minmax(0, 1fr) 92px 311px 92px minmax(0, 1fr);
    align-items: center;
    height: 92px;
  }
  .name {
    padding-bottom: 6px;
    font-size: 54px;
    font-weight: 500;
    line-height: 72px;
    white-space: nowrap;
  }
  .home {
    padding-right: 32px;
    text-align: right;
  }
  .crest {
    display: block;
    width: 92px;
    height: 92px;
  }
  .slim {
    font-family: 'Noto Sans CJK SC', sans-serif;
  }
  .vs {
    padding-bottom: 18px;
    color: #b8bbce;
    font-size: 60px;
    font-weight: 700;
    line-height: 72px;
    text-align: center;
  }
  .away {
    display: flex;
    align-items: center;
    justify-content: space-between;
    padding: 0 57px 0 32px;
  }
  .remind svg {
    display: block;
    width: 54px;
    height: 58px;
  }
  .today {
    position: absolute;
    bottom: 61px;
    left: 50%;
    display: flex;
    align-items: center;
    justify-content: center;
    gap: 30px;
    width: 312px;
    height: 123px;
    padding-left: 10px;
    margin-left: -156px;
    border-radius: 62px;
    background: #3377ff;
    color: #fff;
    font-size: 58px;
    font-weight: 500;
  }
  .today span {
    padding-bottom: 6px;
  }
  .today svg {
    width: 42px;
    height: 54px;
  }
  nav {
    display: flex;
    box-sizing: border-box;
    height: 226px;
    padding-top: 14px;
    border-top: 2px solid #f7f7f9;
    background: #fff;
  }
  nav a {
    display: flex;
    flex: 1;
    flex-direction: column;
    align-items: center;
    gap: 9px;
    color: #272a32;
    font-size: 36px;
    font-weight: 500;
    line-height: 52px;
    text-decoration: none;
  }
  nav a span {
    color: #030618;
  }
  nav .current,
  nav .current span {
    color: #3377ff;
  }
  .nav-icon {
    width: 92px;
    height: 92px;
  }
</style>
